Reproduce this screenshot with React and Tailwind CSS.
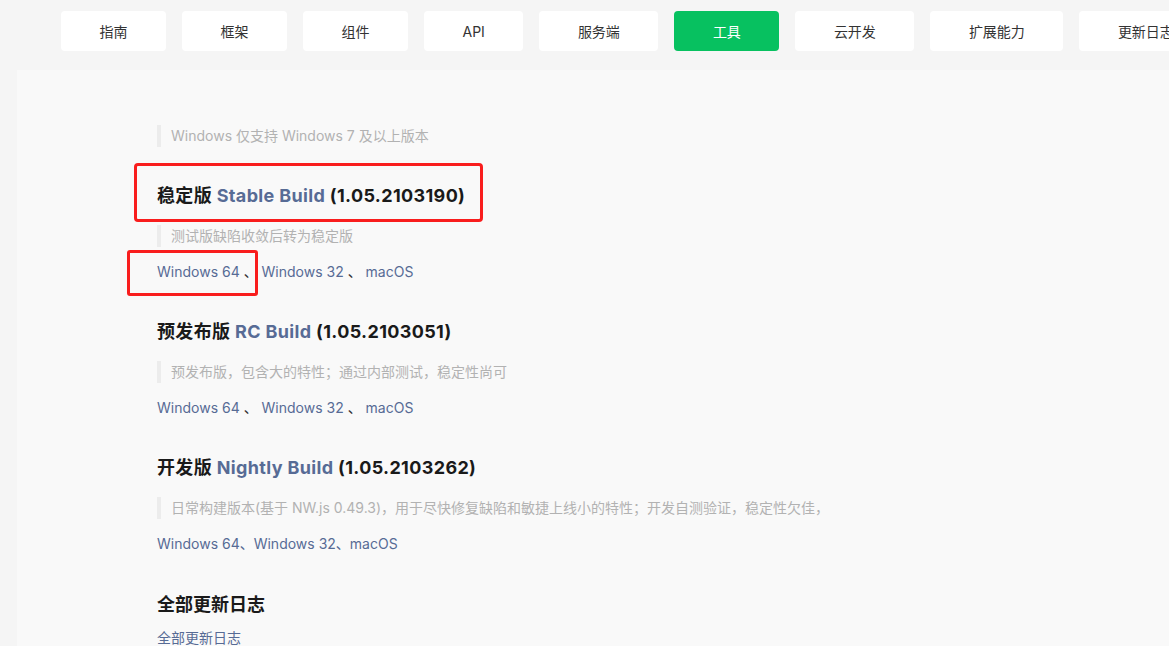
import React from "react";

const navItems = ["指南", "框架", "组件", "API", "服务端", "工具", "云开发", "扩展能力", "更新日志"];

function Quote({ children, className = "" }) {
  return (
    <div className={"border-l-4 border-[#ececec] pl-[10px] h-[22px] leading-[22px] text-[14px] text-[#b2b2b2] whitespace-nowrap " + className}>
      {children}
    </div>
  );
}

function Heading({ cn, en, ver, className = "", children }) {
  return (
    <div className={"relative h-[28px] leading-[28px] text-[18px] font-bold text-[#1a1a1a] whitespace-nowrap tracking-[0.35px] " + className}>
      {cn} <span className="text-[#576b95]">{en}</span> {ver}
      {children}
    </div>
  );
}

function Links({ className = "", compact = false, children }) {
  return (
    <div className={"relative h-[22px] leading-[22px] text-[14px] text-[#576b95] whitespace-nowrap " + className}>
      {compact ? (
        <span>Windows 64、Windows 32、macOS</span>
      ) : (
        <span>
          Windows 64 <span className="text-[#333]">、</span> Windows 32 <span className="text-[#333]">、</span> macOS
        </span>
      )}
      {children}
    </div>
  );
}

export default function App() {
  return (
    <div
      className="w-[1169px] h-[646px] overflow-hidden bg-[#f5f5f5]"
      style={{ fontFamily: 'Inter, "Noto Sans CJK SC", sans-serif' }}
    >
      <nav className="flex gap-4 pl-[61px] pt-[11px] h-[70px] whitespace-nowrap">
        {navItems.map((item) => (
          <div
            key={item}
            className={
              "shrink-0 h-10 px-[38.5px] flex items-center justify-center rounded-[4px] text-[14px] " +
              (item === "工具" ? "bg-[#07c160] text-white" : "bg-white text-[#333]")
            }
          >
            {item}
          </div>
        ))}
      </nav>
      <main className="ml-[17px] h-[576px] bg-[#f9f9f9] pl-[140px] pt-[55px]">
        <Quote>Windows 仅支持 Windows 7 及以上版本</Quote>

        <Heading cn="稳定版" en="Stable Build" ver="(1.05.2103190)" className="mt-[35px]">
          <div className="absolute left-[-23px] top-[-19px] w-[349px] h-[59px] border-[3px] border-[#f91d1d] rounded-[4px]" />
        </Heading>
        <Quote className="mt-[15px]">测试版缺陷收敛后转为稳定版</Quote>
        <Links className="mt-[14px]">
          <div className="absolute left-[-30px] top-[-11px] w-[131px] h-[46px] border-[3px] border-[#f91d1d] rounded-[3px]" />
        </Links>

        <Heading cn="预发布版" en="RC Build" ver="(1.05.2103051)" className="mt-[35px]" />
        <Quote className="mt-[15px]">预发布版，包含大的特性；通过内部测试，稳定性尚可</Quote>
        <Links className="mt-[14px]" />

        <Heading cn="开发版" en="Nightly Build" ver="(1.05.2103262)" className="mt-[35px]" />
        <Quote className="mt-[15px]">日常构建版本(基于 NW.js 0.49.3)，用于尽快修复缺陷和敏捷上线小的特性；开发自测验证，稳定性欠佳，</Quote>
        <Links className="mt-[14px]" compact />

        <div className="mt-[36px] h-[28px] leading-[28px] text-[18px] font-bold text-[#1a1a1a]">全部更新日志</div>
        <div className="mt-[8px] h-[22px] leading-[22px] text-[14px] text-[#576b95]">全部更新日志</div>
      </main>
    </div>
  );
}
